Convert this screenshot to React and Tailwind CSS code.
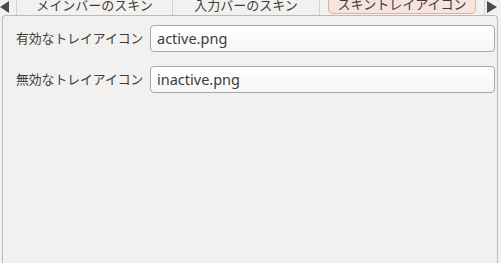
import React from "react";

const font = { fontFamily: '"Noto Sans", "Noto Sans CJK JP", sans-serif' };

const Field = ({ label, value }) => (
	<div className="flex items-center h-[27px]">
		<span className="w-[147px] shrink-0 pl-[13px] text-[12.8px] text-[#3c3c3c] leading-none whitespace-nowrap">
			{label}
		</span>
		<div
			className="flex-1 h-[27px] flex items-center px-[6px] 
			           border border-[#a9a9a9] rounded-[4px]
			           bg-gradient-to-b from-white to-[#f6f6f6]
			           text-[14.5px] text-[#3c3c3c]"
		>
			{value}
		</div>
	</div>
);

export default function App() {
	return (
		<div
			className="w-[501px] h-[263px] bg-[#f2f1ef] overflow-hidden"
			style={font}
		>
			{/* TAB BAR */}
			<div className="flex h-[15px] text-[13px] text-[#3c3c3c] leading-none">
				<div className="w-[16px] flex items-start justify-start">
					<svg width="10" height="12" viewBox="0 0 10 12" className="mt-[1px]">
						<polygon points="9,0 9,12 0,6" fill="#4a4a48" />
					</svg>
				</div>
				<div className="w-[156px] border-l border-[#d4d2ce] flex items-end justify-center pb-[3px]">
					メインバーのスキン
				</div>
				<div className="w-[148px] border-l border-r border-[#d4d2ce] flex items-end justify-center pb-[3px]">
					入力バーのスキン
				</div>
				<div className="w-[8px]" />
				<div
					className="w-[148px] h-[14px] border border-t-0 border-[#d9b3a6] 
					           rounded-b-[5px] bg-[#f7e3dc] 
					           flex items-end justify-center pb-[2px]"
				>
					スキントレイアイコン
				</div>
				<div className="w-[8px]" />
				<div className="flex-1 border-l border-[#d4d2ce] flex items-start pl-[2px]">
					<svg width="10" height="12" viewBox="0 0 10 12" className="mt-[1px]">
						<polygon points="0,0 0,12 10,6" fill="#4a4a48" />
					</svg>
				</div>
			</div>

			{/* PANEL */}
			<div className="ml-[2px] w-[496px] h-[260px] border border-[#bcbab5] border-b-0 rounded-tl-[4px] rounded-tr-[4px] pt-[9px] pr-[2px] flex flex-col gap-[14px]">
				<Field label="有効なトレイアイコン" value="active.png" />
				<Field label="無効なトレイアイコン" value="inactive.png" />
			</div>
		</div>
	);
}
